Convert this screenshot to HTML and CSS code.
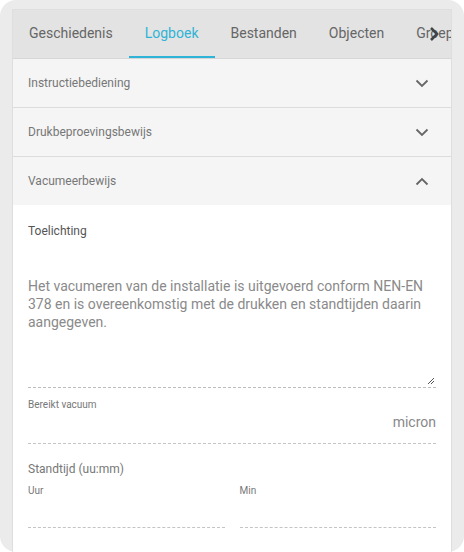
FILE: index.html
```html
<!DOCTYPE html>
<html lang="nl">
<head>
    <meta charset="UTF-8">
    <meta name="viewport" content="width=device-width, initial-scale=1.0">
    <title>Logboek</title>
    <link rel="stylesheet" href="styles.css">
</head>
<body>

    <div class="frame">
        <div class="card">
            <div class="tabs">
                <div class="tab">Geschiedenis</div>
                <div class="tab active">Logboek</div>
                <div class="tab">Bestanden</div>
                <div class="tab">Objecten</div>
                <div class="tab">Groep</div>
                <svg class="tab-next" width="14" height="16" viewBox="0 0 14 16"><path d="M4 2 L10 8 L4 14" fill="none" stroke="#444" stroke-width="2.6"/></svg>
            </div>

            <div class="acc">
                <span>Instructiebediening</span>
                <svg class="chev" width="14" height="9" viewBox="0 0 14 9"><path d="M1.5 1.5 L7 7 L12.5 1.5" fill="none" stroke="#666" stroke-width="1.8"/></svg>
            </div>
            <div class="acc">
                <span>Drukbeproevingsbewijs</span>
                <svg class="chev" width="14" height="9" viewBox="0 0 14 9"><path d="M1.5 1.5 L7 7 L12.5 1.5" fill="none" stroke="#666" stroke-width="1.8"/></svg>
            </div>
            <div class="acc open">
                <span>Vacumeerbewijs</span>
                <svg class="chev" width="14" height="9" viewBox="0 0 14 9"><path d="M1.5 7.5 L7 2 L12.5 7.5" fill="none" stroke="#666" stroke-width="1.8"/></svg>
            </div>

            <div class="panel">
                <div class="label">Toelichting</div>
                <div class="textarea">
                    Het vacumeren van de installatie is uitgevoerd conform NEN-EN 378 en is overeenkomstig met de drukken en standtijden daarin aangegeven.
                    <svg class="grip" width="8" height="8" viewBox="0 0 8 8"><path d="M7 1 L1 7 M7 4 L4 7" stroke="#555" stroke-width="1"/></svg>
                </div>

                <div class="field">
                    <div class="small">Bereikt vacuum</div>
                    <div class="value">micron</div>
                </div>

                <div class="label sub">Standtijd (uu:mm)</div>
                <div class="pair">
                    <div class="field">
                        <div class="small">Uur</div>
                        <div class="value"></div>
                    </div>
                    <div class="field">
                        <div class="small">Min</div>
                        <div class="value"></div>
                    </div>
                </div>
            </div>
        </div>
    </div>

</body>
</html>
```

FILE: styles.css
```css
html, body {
    margin: 0;
    padding: 0;
    background: #fff;
}
body {
    font-family: Roboto, "Liberation Sans", sans-serif;
    width: 464px;
    height: 552px;
    overflow: hidden;
}
.frame {
    background: #ebebeb;
    border-radius: 16px;
    height: 552px;
    padding: 9px 12px 0 12px;
    box-sizing: border-box;
    overflow: hidden;
}
.card {
    background: #fff;
    height: 600px;
    border: 1px solid #dedede;
    border-bottom: none;
    box-sizing: border-box;
}
.tabs {
    display: flex;
    height: 48px;
    background: #e3e3e3;
    border-bottom: 1px solid #d6d6d6;
    overflow: hidden;
    position: relative;
}
.tab {
    font-size: 14px;
    color: #666;
    padding: 0 16px;
    line-height: 46px;
    white-space: nowrap;
    flex: none;
}
.tab.active {
    color: #2fb3d6;
    border-bottom: 2px solid #2fb3d6;
}
.tab-next {
    position: absolute;
    right: 10px;
    top: 16px;
}
.acc {
    display: flex;
    justify-content: space-between;
    align-items: center;
    height: 48px;
    background: #f5f5f5;
    border-bottom: 1px solid #dcdcdc;
    padding: 0 15px;
    font-size: 12px;
    color: #777;
}
.acc.open {
    border-bottom: none;
}
.chev {
    margin-right: 7px;
}
.panel {
    padding: 19px 15px 0 15px;
}
.label {
    font-size: 12px;
    color: #555;
}
.label.sub {
    color: #777;
    margin-top: 18px;
}
.textarea {
    position: relative;
    margin-top: 39px;
    font-size: 14px;
    line-height: 18px;
    color: #8a8a8a;
    height: 110px;
    border-bottom: 1px dashed #bdbdbd;
}
.grip {
    position: absolute;
    right: 1px;
    bottom: 2px;
}
.field {
    border-bottom: 1px dashed #c4c4c4;
    margin-top: 11px;
}
.small {
    font-size: 10px;
    color: #777;
}
.value {
    text-align: right;
    font-size: 14px;
    color: #888;
    height: 18px;
    padding: 4px 0 11px 0;
}
.pair {
    display: flex;
    gap: 15px;
}
.pair .field {
    flex: 1;
    margin-top: 9px;
}
.pair .value {
    height: 16px;
}
```
